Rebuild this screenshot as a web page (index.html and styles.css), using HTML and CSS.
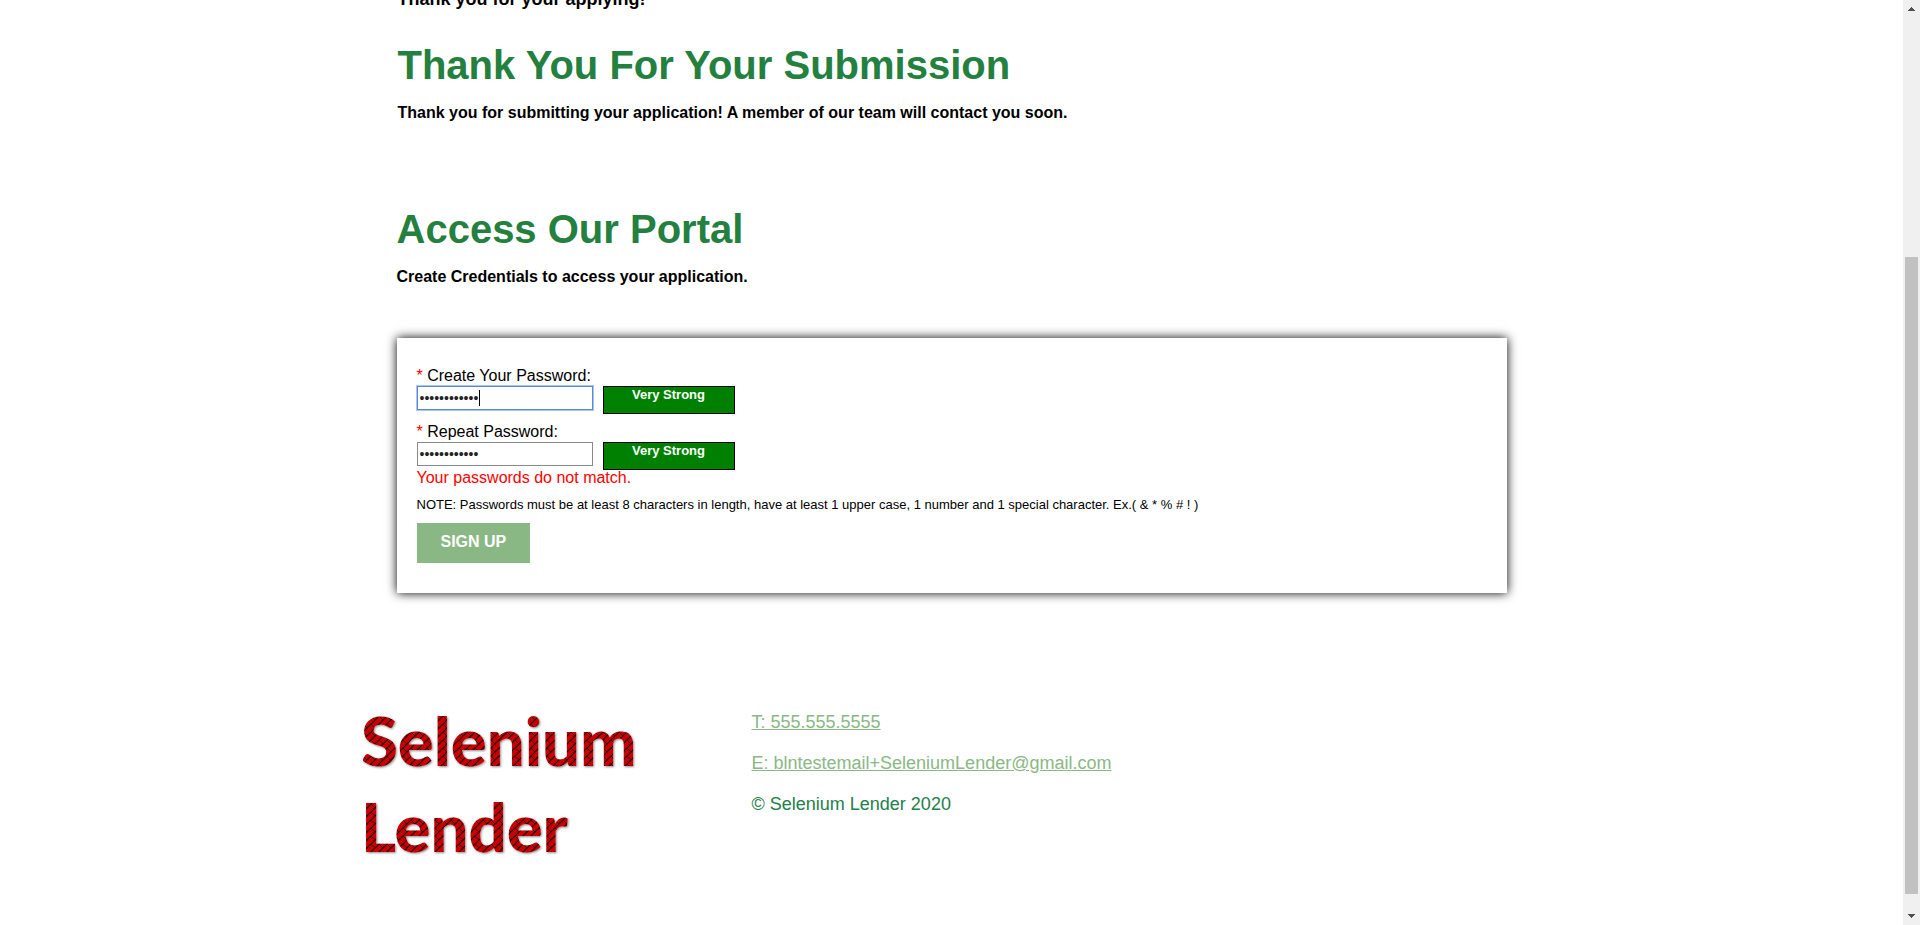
FILE: index.html
```html
<!DOCTYPE html>
<html lang="en">
<head>
<meta charset="utf-8">
<title>Selenium Lender</title>
<link rel="stylesheet" href="styles.css">
</head>
<body>
<div class="page">
  <main class="content">
    <p class="applied">Thank you for your applying!</p>
    <section class="intro">
      <h1 class="title">Thank You For Your Submission</h1>
      <p class="lead">Thank you for submitting your application! A member of our team will contact you soon.</p>
    </section>
    <section class="intro">
      <h2 class="title">Access Our Portal</h2>
      <p class="lead">Create Credentials to access your application.</p>
    </section>
    <form class="card">
      <div class="field">
        <label for="pw1"><span class="req">*</span> Create Your Password:</label>
        <div class="row">
          <div class="box"><input class="pw focused" id="pw1" type="password" value="Password123!"><span class="caret"></span></div>
          <output class="strength" for="pw1">Very Strong</output>
        </div>
      </div>
      <div class="field">
        <label for="pw2"><span class="req">*</span> Repeat Password:</label>
        <div class="row">
          <div class="box"><input class="pw" id="pw2" type="password" value="Password124!"></div>
          <output class="strength" for="pw2">Very Strong</output>
        </div>
      </div>
      <p class="error">Your passwords do not match.</p>
      <p class="note">NOTE: Passwords must be at least 8 characters in length, have at least 1 upper case, 1 number and 1 special character. Ex.( &amp; * % # ! )</p>
      <button class="signup" type="button">SIGN UP</button>
    </form>
  </main>
  <footer class="footer">
    <svg class="logo" viewBox="0 0 300 170" role="img" aria-label="Selenium Lender">
      <defs>
        <pattern id="brick" width="8" height="8" patternUnits="userSpaceOnUse">
          <rect width="8" height="8" fill="#c80404"/>
          <path d="M-1 9L9 -1M-1 1L1 -1M7 9L9 7" stroke="#240000" stroke-width="1.2"/>
          <path d="M0 0L4 4" stroke="#300000" stroke-width="1"/>
        </pattern>
        <filter id="shade" x="-5%" y="-10%" width="110%" height="125%">
          <feDropShadow dx="1" dy="1" stdDeviation="1" flood-color="#000" flood-opacity=".45"/>
        </filter>
      </defs>
      <g filter="url(#shade)" fill="url(#brick)">
        <text class="logo-text" x="-2" y="66">Selenium</text>
        <text class="logo-text" x="-2" y="152">Lender</text>
      </g>
    </svg>
    <div class="contact">
      <a href="tel:5555555555">T: 555.555.5555</a>
      <a href="mailto:blntestemail+SeleniumLender@gmail.com">E: blntestemail+SeleniumLender@gmail.com</a>
      <p>© Selenium Lender 2020</p>
    </div>
  </footer>
</div>
<div class="scrollbar" aria-hidden="true">
  <svg class="arrow" viewBox="0 0 17 17"><path d="M5 11h7v-1h-1v-1h-1v-1h-1v-1h-1v1h-1v1h-1v1h-1z" fill="#505050"/></svg>
  <div class="track"><div class="thumb"></div></div>
  <svg class="arrow" viewBox="0 0 17 17"><path d="M5 6h7v1h-1v1h-1v1h-1v1h-1v-1h-1v-1h-1v-1h-1z" fill="#505050"/></svg>
</div>
</body>
</html>
```
FILE: styles.css
```css
* { box-sizing: border-box; }
body {
  margin: 0;
  display: flex;
  height: 100vh;
  overflow: hidden;
  background: #fff;
  color: #000;
  font: 16px/20px "Liberation Sans", Arial, sans-serif;
}
p, h1, h2 { margin: 0; }
.page { flex: 1; min-width: 0; overflow: hidden; }
.content { max-width: 1170px; margin: 0 auto; padding: 0 30px; }
.applied {
  display: flex;
  align-items: flex-end;
  height: 9px;
  margin-bottom: 34px;
  padding-left: 1px;
  font-size: 18px;
  font-weight: bold;
}
.intro { margin-bottom: 84px; padding-left: 1px; }
.intro + .intro { margin-bottom: 51px; padding-left: 0; }
.title {
  margin-bottom: 16px;
  color: #23803f;
  font-size: 40px;
  line-height: 44px;
}
.lead { font-weight: bold; }
.card {
  padding: 28px 20px 30px;
  background: #fff;
  box-shadow: 0 0 10px #000;
}
.field { margin-bottom: 8px; }
.field label { display: block; }
.req, .error { color: #f00; }
.row { display: flex; gap: 10px; height: 28px; }
.box { position: relative; height: 24px; }
.pw {
  display: block;
  width: 176px;
  height: 24px;
  padding: 0 2px;
  border: 1px solid #8a8a8a;
  border-radius: 0;
  background: #fff;
  color: #222;
  font: 14px "Liberation Sans", Arial, sans-serif;
}
.focused { border-color: #5b87d0; outline: 1px solid #a8c7fa; }
.caret {
  position: absolute;
  left: 62px;
  top: 4px;
  width: 1px;
  height: 16px;
  background: #000;
}
.strength {
  width: 132px;
  height: 28px;
  border: 1px solid #000;
  background: #008000;
  color: #fff;
  font-size: 13px;
  font-weight: bold;
  line-height: 16px;
  text-align: center;
}
.field + .error { margin-top: -10px; }
.note { margin: 7px 0 8px; font-size: 13px; }
.signup {
  display: block;
  height: 40px;
  padding: 0 24px 2px;
  border: 0;
  background: #8ab885;
  color: #fff;
  font: bold 16px "Liberation Sans", Arial, sans-serif;
}
.footer {
  display: flex;
  gap: 89px;
  max-width: 1178px;
  margin: 107px auto 0;
}
.logo { width: 300px; height: 170px; }
.logo-text { font: 900 67px Lato, sans-serif; }
.contact {
  display: flex;
  flex-direction: column;
  align-items: flex-start;
  gap: 21px;
  padding-top: 12px;
  color: #23804a;
  font-size: 18px;
}
.contact a { color: #8ab885; }
.scrollbar {
  display: flex;
  flex-direction: column;
  width: 17px;
  background: #f0f0f0;
}
.arrow { width: 17px; height: 17px; }
.track { flex: 1; padding: 240px 2px 14px; }
.thumb { height: 100%; background: #c1c1c1; }
```
